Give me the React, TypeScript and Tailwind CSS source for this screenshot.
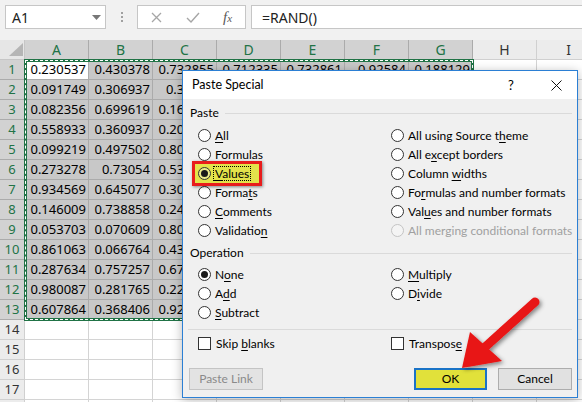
import React from "react";

const colA = ["0.230537","0.091749","0.082356","0.558933","0.099219","0.273278","0.934569","0.146009","0.053703","0.861063","0.287634","0.980087","0.607864"];
const colB = ["0.430378","0.306937","0.699619","0.360937","0.497502","0.73054","0.645077","0.738858","0.070609","0.066764","0.757257","0.281765","0.368406"];
const colC = ["0.732855","0.35418","0.164213","0.205873","0.802564","0.534287","0.304612","0.245719","0.801356","0.436925","0.671038","0.224786","0.925413"];
const colD = ["0.712335"];
const colE = ["0.732861"];
const colF = ["0.92584"];
const colG = ["0.188129"];
const cols = [colA, colB, colC, colD, colE, colF, colG];
const letters = ["A","B","C","D","E","F","G","H","I"];

function TopBar() {
  return (
    <div className="h-[40px] bg-[#f1f1f1] flex items-start pt-[5px] pl-[5px]">
      <div className="relative w-[101px] h-[24px] bg-white border border-[#c6c6c6] flex items-center pl-[6px] text-[14px] text-[#222]">
        A1
        <svg className="absolute left-[86px] top-[9px]" width="9" height="5" viewBox="0 0 9 5">
          <polygon points="0,0 9,0 4.5,5" fill="#777" />
        </svg>
      </div>
      <div className="w-[31px] h-[24px] flex flex-col items-center justify-center gap-[2px]">
        <span className="w-[2px] h-[2px] bg-[#a0a0a0]" />
        <span className="w-[2px] h-[2px] bg-[#a0a0a0]" />
        <span className="w-[2px] h-[2px] bg-[#a0a0a0]" />
      </div>
      <div className="relative w-[109px] h-[24px] bg-white border border-[#c6c6c6]">
        <svg className="absolute left-[13px] top-[6px]" width="11" height="11" viewBox="0 0 11 11">
          <path d="M1 1 L10 10 M10 1 L1 10" stroke="#a6a6a6" strokeWidth="1.3" fill="none" />
        </svg>
        <svg className="absolute left-[48px] top-[6px]" width="14" height="11" viewBox="0 0 14 11">
          <path d="M1 6 L5 10 L13 1" stroke="#a6a6a6" strokeWidth="1.4" fill="none" />
        </svg>
        <span className="absolute left-[85px] top-[1px] font-['Liberation_Serif',serif] italic text-[15px] text-[#5a5a5a] leading-[20px]">
          f<span className="text-[11px]">x</span>
        </span>
      </div>
      <div className="ml-[5px] flex-1 -mr-[4px] h-[24px] bg-white border border-[#c6c6c6] flex items-center pl-[10px] text-[14px] text-[#222]">
        =RAND()
      </div>
    </div>
  );
}

function Grid() {
  const rows = [];
  for (let r = 1; r <= 18; r++) {
    const rowSel = r <= 13;
    const cells = [];
    cells.push(
      <div
        key={`h${r}`}
        className={
          rowSel
            ? "bg-[#d2d2d2] border-r border-b border-[#ababab] text-[#217346] text-[13px] leading-[19px] text-center"
            : "bg-[#ececec] border-r border-b border-[#d0d0d0] text-[#333] text-[13px] leading-[19px] text-center"
        }
      >
        {r <= 17 ? r : ""}
      </div>
    );
    for (let c = 0; c < 9; c++) {
      const sel = rowSel && c < 7;
      const val = sel ? cols[c][r - 1] ?? "" : "";
      const active = r === 1 && c === 0;
      cells.push(
        <div
          key={`c${r}-${c}`}
          className={
            active
              ? "bg-white border-r border-b border-[#ababab] text-right pr-[2px] text-[13px] leading-[19px] text-black"
              : sel
              ? "bg-[#c8c8c8] border-r border-b border-[#ababab] text-right pr-[2px] text-[13px] leading-[19px] text-black"
              : "bg-white border-r border-b border-[#d4d4d4] text-right pr-[2px] text-[13px] leading-[19px] text-black"
          }
        >
          {val}
        </div>
      );
    }
    rows.push(...cells);
  }
  return (
    <div className="grid grid-cols-[25px_repeat(9,64px)] auto-rows-[20px] w-[601px]">
      <div className="relative bg-[#e6e6e6] border-r border-b border-[#c6c6c6]">
        <svg className="absolute left-[9px] top-[3px]" width="14" height="13" viewBox="0 0 14 13">
          <polygon points="14,0 14,13 0,13" fill="#b5b5b5" />
        </svg>
      </div>
      {letters.map((l, i) => (
        <div
          key={l}
          className={
            i < 7
              ? "bg-[#d2d2d2] border-r border-b border-[#ababab] text-[#217346] text-[14px] leading-[19px] text-center"
              : "bg-[#ececec] border-r border-b border-[#d0d0d0] text-[#333] text-[14px] leading-[19px] text-center"
          }
        >
          {l}
        </div>
      ))}
      {rows}
    </div>
  );
}

function U({ t, u }: { t: string; u: number }) {
  if (u < 0) return <span>{t}</span>;
  return (
    <span>
      {t.slice(0, u)}
      <span className="underline underline-offset-[2px]">{t[u]}</span>
      {t.slice(u + 1)}
    </span>
  );
}

function Radio({ checked, disabled, clear }: { checked?: boolean; disabled?: boolean; clear?: boolean }) {
  return (
    <span
      className={
        disabled
          ? "w-[13px] h-[13px] rounded-full border border-[#c4c4c4] bg-[#f4f4f4] flex items-center justify-center shrink-0"
          : clear
          ? "relative z-10 w-[13px] h-[13px] rounded-full border border-[#333] bg-[#ecec8a] flex items-center justify-center shrink-0"
          : "w-[13px] h-[13px] rounded-full border border-[#333] bg-white flex items-center justify-center shrink-0"
      }
    >
      {checked && <span className="w-[7px] h-[7px] rounded-full bg-[#1a1a1a]" />}
    </span>
  );
}

function Opt({ t, u, checked, disabled }: { t: string; u: number; checked?: boolean; disabled?: boolean }) {
  return (
    <div className={disabled ? "h-[19px] flex items-center gap-[4px] text-[#a0a0a0]" : "h-[19px] flex items-center gap-[4px]"}>
      <Radio checked={checked} disabled={disabled} />
      <U t={t} u={u} />
    </div>
  );
}

function GroupLabel({ t }: { t: string }) {
  return (
    <div className="h-[16px] flex items-center ml-[7px] mr-[5px]">
      <span>{t}</span>
      <span className="flex-1 h-px bg-[#dadada] ml-[6px]" />
    </div>
  );
}

function Check({ t, u }: { t: string; u: number }) {
  return (
    <div className="h-[19px] flex items-center gap-[5px]">
      <span className="w-[13px] h-[13px] border border-[#333] bg-white shrink-0" />
      <U t={t} u={u} />
    </div>
  );
}

function Dialog() {
  return (
    <div className="absolute left-[182px] top-[70px] w-[396px] h-[328px] bg-[#f0f0f0] border border-[#2b7fd4] shadow-[0_2px_10px_rgba(0,0,0,0.28)] font-['Lato',sans-serif] text-[12px] text-black flex flex-col">
      <div className="relative h-[28px] bg-white flex items-center pl-[9px] shrink-0">
        <span className="text-[12.5px]">Paste Special</span>
        <span className="absolute left-[325px] top-[5px] text-[13px]">?</span>
        <svg className="absolute left-[368px] top-[9px]" width="11" height="11" viewBox="0 0 11 11">
          <path d="M0.5 0.5 L10.5 10.5 M10.5 0.5 L0.5 10.5" stroke="#111" strokeWidth="1" fill="none" />
        </svg>
      </div>
      <div className="mt-[6px]">
        <GroupLabel t="Paste" />
      </div>
      <div className="mt-[5px] pl-[15px] grid grid-cols-[193px_1fr]">
        <Opt t="All" u={0} />
        <Opt t="All using Source theme" u={18} />
        <Opt t="Formulas" u={0} />
        <Opt t="All except borders" u={5} />
        <div className="relative h-[19px] flex items-center">
          <span className="absolute left-[-6px] top-[-3px] w-[70px] h-[25px] border-[3px] border-[#e81c1c] bg-[#e3e34b] shadow-[1px_1px_3px_rgba(0,0,0,0.45)]" />
          <Radio checked clear />
          <span className="relative z-10 ml-[2px] border border-dotted border-black px-[1px] leading-[13px]">
            <U t="Values" u={0} />
          </span>
        </div>
        <Opt t="Column widths" u={7} />
        <Opt t="Formats" u={5} />
        <Opt t="Formulas and number formats" u={2} />
        <Opt t="Comments" u={0} />
        <Opt t="Values and number formats" u={3} />
        <Opt t="Validation" u={9} />
        <Opt t="All merging conditional formats" u={-1} disabled />
      </div>
      <div className="mt-[5px]">
        <GroupLabel t="Operation" />
      </div>
      <div className="mt-[4px] pl-[15px] grid grid-cols-[193px_1fr]">
        <Opt t="None" u={1} checked />
        <Opt t="Multiply" u={0} />
        <Opt t="Add" u={1} />
        <Opt t="Divide" u={1} />
        <Opt t="Subtract" u={0} />
        <div />
      </div>
      <div className="mt-[7px] ml-[5px] mr-[5px] h-px bg-[#dadada]" />
      <div className="mt-[4px] pl-[15px] grid grid-cols-[193px_1fr]">
        <Check t="Skip blanks" u={5} />
        <Check t="Transpose" u={8} />
      </div>
      <div className="mt-[15px] pl-[6px] flex">
        <div className="w-[74px] h-[22px] bg-[#e3e3e3] border border-[#c4c4c4] text-[#8a8a8a] flex items-center justify-center">
          Paste Link
        </div>
        <div className="ml-[151px] w-[73px] h-[22px] bg-[#e1e13a] border-2 border-[#1a73c7] flex items-center justify-center">
          OK
        </div>
        <div className="ml-[11px] w-[74px] h-[22px] bg-[#e1e1e1] border border-[#adadad] flex items-center justify-center">
          Cancel
        </div>
      </div>
    </div>
  );
}

function Arrow() {
  return (
    <svg className="absolute left-0 top-0 pointer-events-none" width="582" height="402" viewBox="0 0 582 402">
      <defs>
        <filter id="sh" x="-20%" y="-20%" width="140%" height="140%">
          <feDropShadow dx="2" dy="2" stdDeviation="2" floodColor="#000" floodOpacity="0.45" />
        </filter>
      </defs>
      <g filter="url(#sh)">
        <line x1="535" y1="302" x2="484" y2="348" stroke="#e81414" strokeWidth="9" strokeLinecap="round" />
        <polygon points="462,368 470,332 502,361" fill="#e81414" />
      </g>
    </svg>
  );
}

export default function App() {
  return (
    <div className="relative w-[582px] h-[402px] overflow-hidden bg-white font-['Noto_Sans',sans-serif]">
      <TopBar />
      <Grid />
      <div className="absolute left-[24px] top-[59px] w-[450px] h-[262px] border-[3px] border-[#217346] pointer-events-none">
        <div className="absolute inset-[-2px] border border-dashed border-white" />
      </div>
      <Dialog />
      <Arrow />
    </div>
  );
}
